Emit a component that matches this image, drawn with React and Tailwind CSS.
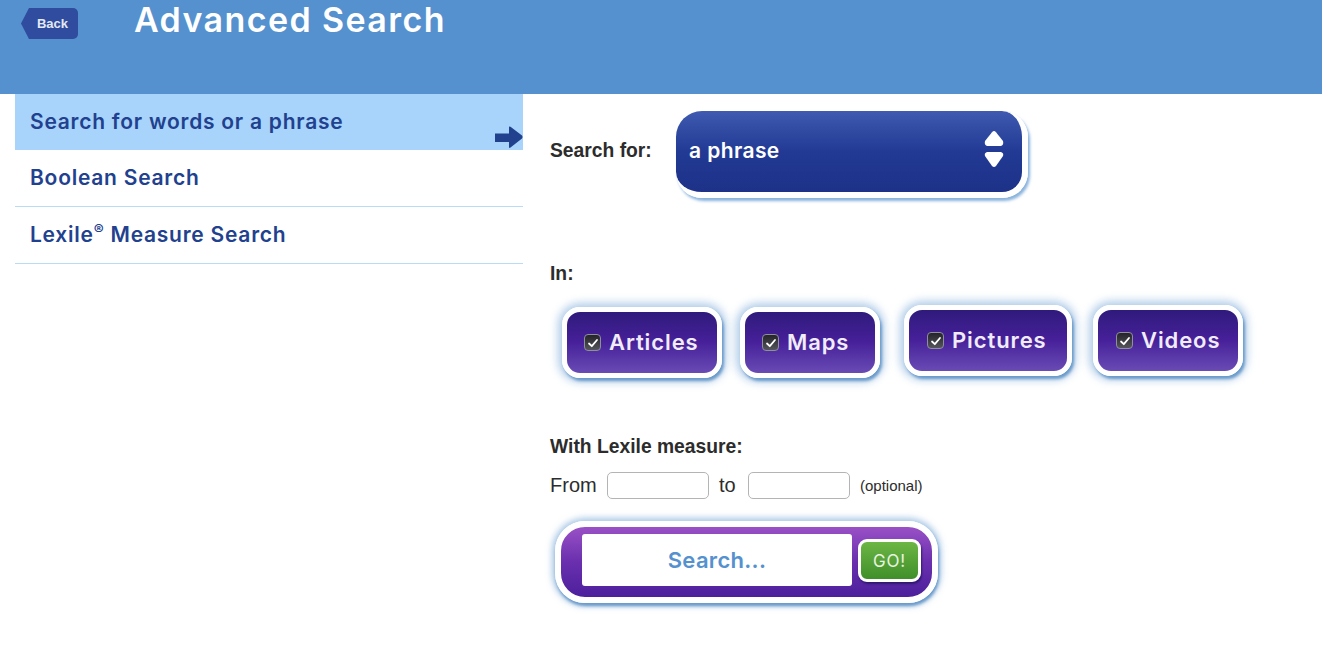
const display = "font-['Inter','Noto_Sans',sans-serif]";
const helv = "font-['Liberation_Sans',Arial,sans-serif]";

function Check() {
  return (
    <span className="flex h-[17px] w-[17px] shrink-0 items-center justify-center rounded-[4px] border border-[#8f8f9c] bg-gradient-to-b from-[#24242a] to-[#55555c]">
      <svg width="12" height="12" viewBox="0 0 12 12" fill="none">
        <path d="M2 6.5 L4.8 9.2 L10 3" stroke="#fff" strokeWidth="1.8" strokeLinecap="round" strokeLinejoin="round" />
      </svg>
    </span>
  );
}

function Pill({ label, width, mt, ml, pad }) {
  return (
    <div
      className={`flex h-[71px] items-center gap-[8px] rounded-[18px] border-[5px] border-white bg-gradient-to-b from-[#2f1a7c] via-[#47209a] to-[#6a4ab4] shadow-[0_0_9px_4px_rgba(85,145,206,0.45),2px_3px_3px_rgba(60,120,180,0.7)] ${width} ${mt} ${ml} ${pad}`}
    >
      <Check />
      <span className={`${display} text-[22px] font-semibold tracking-[0.9px] text-[#f1ecfa]`}>{label}</span>
    </div>
  );
}

export default function App() {
  return (
    <div className="h-[646px] w-[1322px] overflow-hidden bg-white">
      <header className="flex h-[94px] items-start bg-[#5591ce] pl-[21px]">
        <div className="mt-[8px] flex h-[31px] w-[57px] items-center justify-end rounded-[5px] bg-[#2f4c9f] pr-[10px] [clip-path:polygon(0_50%,14%_0,100%_0,100%_100%,14%_100%)]">
          <span className={`${helv} text-[13px] font-bold text-[#e4e9f4]`}>Back</span>
        </div>
        <h1 className={`${display} ml-[56px] text-[34px] leading-[40px] font-semibold tracking-[1.4px] text-white`}>
          Advanced Search
        </h1>
      </header>

      <main className="flex items-start">
        <nav className="ml-[15px] w-[508px] shrink-0">
          <div className="relative flex h-[56px] items-center bg-[#a8d4fb] pl-[15px]">
            <span className={`${display} text-[21px] font-semibold tracking-[0.75px] text-[#21418f]`}>Search for words or a phrase</span>
            <svg className="absolute bottom-[1px] right-0" width="28" height="23" viewBox="0 0 28 23">
              <path d="M0 7.5 L14 7.5 L14 1 Q14 0 15.5 0.8 L27 9.5 Q28 11 27 12.5 L15.5 21.5 Q14 22.5 14 21 L14 16 L0 16 Z" fill="#21418f" />
            </svg>
          </div>
          <div className="flex h-[57px] items-center border-b border-[#b9dbf5] pl-[15px]">
            <span className={`${display} text-[21px] font-semibold tracking-[0.75px] text-[#21418f]`}>Boolean Search</span>
          </div>
          <div className="flex h-[57px] items-center border-b border-[#b9dbf5] pl-[15px]">
            <span className={`${display} text-[21px] font-semibold tracking-[0.75px] text-[#21418f]`}>
              Lexile<sup className="text-[15px]">®</sup> Measure Search
            </span>
          </div>
        </nav>

        <section className={`${helv} ml-[27px] flex flex-col items-start text-[#2c2c2c]`}>
          <div className="mt-[17px] flex items-center">
            <span className="w-[126px] pb-[6px] text-[19.3px] font-bold">Search for:</span>
            <div className="flex h-[87px] w-[352px] items-center justify-between rounded-[26px] border-r-[6px] border-b-[6px] border-white bg-gradient-to-b from-[#3f5ab0] via-[#223a94] to-[#1d3188] pl-[13px] pr-[18px] shadow-[2px_3px_3px_rgba(85,145,206,0.7)]">
              <span className={`${display} pb-[2px] text-[21px] font-semibold tracking-[0.4px] text-white`}>a phrase</span>
              <svg className="mb-[4px]" width="20" height="37" viewBox="0 0 20 37" fill="#fff">
                <path d="M10 0 Q11 0 12 1.2 L19 10 Q20 14 17 15 L3 15 Q0 14 1 10 L8 1.2 Q9 0 10 0 Z" />
                <path d="M3 21 L17 21 Q20 22 19 25 L12 35 Q10 37 8 35 L1 25 Q0 22 3 21 Z" />
              </svg>
            </div>
          </div>

          <div className="mt-[64px] text-[19.3px] font-bold leading-[24px]">In:</div>

          <div className="mt-[19px] flex items-start">
            <Pill label="Articles" width="w-[160px]" mt="mt-[2px]" ml="ml-[12px]" pad="pl-[17px]" />
            <Pill label="Maps" width="w-[140px]" mt="mt-[2px]" ml="ml-[18px]" pad="pl-[17px]" />
            <Pill label="Pictures" width="w-[168px]" mt="mt-0" ml="ml-[24px]" pad="pl-[18px]" />
            <Pill label="Videos" width="w-[150px]" mt="mt-0" ml="ml-[21px]" pad="pl-[18px]" />
          </div>

          <div className="mt-[57px] text-[19.3px] font-bold leading-[24px]">With Lexile measure:</div>

          <div className="mt-[13px] flex h-[27px] items-center">
            <span className="w-[57px] pb-[2px] text-[20px]">From</span>
            <div className="h-[27px] w-[102px] rounded-[5px] border border-[#b4b4b4]" />
            <span className="ml-[10px] w-[29px] pb-[2px] text-[20px]">to</span>
            <div className="h-[27px] w-[102px] rounded-[5px] border border-[#b4b4b4]" />
            <span className="ml-[10px] pt-[2px] text-[15px]">(optional)</span>
          </div>

          <div className="ml-[5px] mt-[22px] flex h-[82px] w-[383px] items-center rounded-[30px] border-[6px] border-white bg-gradient-to-b from-[#9a50c6] via-[#6a2fae] to-[#4c1f9c] pb-[4px] pl-[21px] shadow-[0_0_6px_3px_rgba(85,145,206,0.5),1px_3px_3px_rgba(60,120,180,0.7)]">
            <div className="flex h-[52px] w-[270px] items-center justify-center rounded-[3px] bg-white">
              <span className={`${display} text-[22px] font-semibold tracking-[0.3px] text-[#5591ce]`}>Search...</span>
            </div>
            <div className="ml-[6px] flex h-[43px] w-[63px] items-center justify-center rounded-[9px] border-[3px] border-white bg-gradient-to-b from-[#6cb644] to-[#3f8f2a] pt-[3px] shadow-[1px_2px_2px_rgba(30,20,90,0.7)]">
              <span className={`${display} text-[17px] tracking-[0.8px] text-[#e8f3e0]`}>GO!</span>
            </div>
          </div>
        </section>
      </main>
    </div>
  );
}
